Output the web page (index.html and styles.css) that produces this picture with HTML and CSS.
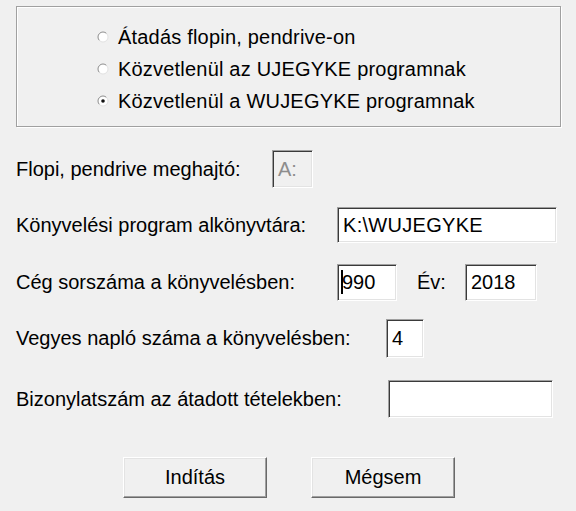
FILE: index.html
```html
<!DOCTYPE html>
<html lang="hu">
<head>
<meta charset="utf-8">
<title>Átadás</title>
<link rel="stylesheet" href="styles.css">
</head>
<body>
<div class="dialog">
  <div class="group">
    <div class="radio-row">
      <svg class="radio" viewBox="0 0 12 12" width="12" height="12"><circle cx="6" cy="6" r="5" fill="#fff"/><path d="M2.46 9.54 A5 5 0 0 1 9.54 2.46" fill="none" stroke="#8c8c8c" stroke-width="1"/><path d="M9.54 2.46 A5 5 0 0 1 2.46 9.54" fill="none" stroke="#e2e2e2" stroke-width="1"/></svg>
      <span>Átadás flopin, pendrive-on</span>
    </div>
    <div class="radio-row">
      <svg class="radio" viewBox="0 0 12 12" width="12" height="12"><circle cx="6" cy="6" r="5" fill="#fff"/><path d="M2.46 9.54 A5 5 0 0 1 9.54 2.46" fill="none" stroke="#8c8c8c" stroke-width="1"/><path d="M9.54 2.46 A5 5 0 0 1 2.46 9.54" fill="none" stroke="#e2e2e2" stroke-width="1"/></svg>
      <span>Közvetlenül az UJEGYKE programnak</span>
    </div>
    <div class="radio-row">
      <svg class="radio" viewBox="0 0 12 12" width="12" height="12"><circle cx="6" cy="6" r="5" fill="#fff"/><path d="M2.46 9.54 A5 5 0 0 1 9.54 2.46" fill="none" stroke="#8c8c8c" stroke-width="1"/><path d="M9.54 2.46 A5 5 0 0 1 2.46 9.54" fill="none" stroke="#e2e2e2" stroke-width="1"/><circle cx="6" cy="6" r="1.8" fill="#111"/></svg>
      <span>Közvetlenül a WUJEGYKE programnak</span>
    </div>
  </div>

  <div class="row row-1">
    <span class="label w-drive">Flopi, pendrive meghajtó:</span>
    <div class="field field-drive disabled">A:</div>
  </div>

  <div class="row row-2">
    <span class="label w-dir">Könyvelési program alkönyvtára:</span>
    <div class="field field-dir">K:\WUJEGYKE</div>
  </div>

  <div class="row row-3">
    <span class="label w-dir">Cég sorszáma a könyvelésben:</span>
    <div class="field field-ceg"><span class="caret"></span>990</div>
    <span class="label ev">Év:</span>
    <div class="field field-ev">2018</div>
  </div>

  <div class="row row-4">
    <span class="label w-naplo">Vegyes napló száma a könyvelésben:</span>
    <div class="field field-naplo">4</div>
  </div>

  <div class="row row-5">
    <span class="label w-biz">Bizonylatszám az átadott tételekben:</span>
    <div class="field field-biz"></div>
  </div>

  <div class="buttons">
    <div class="button">Indítás</div>
    <div class="button">Mégsem</div>
  </div>
</div>
</body>
</html>
```
FILE: styles.css
```css
html, body {
  margin: 0;
  padding: 0;
  background: #f0f0f0;
}

body {
  width: 576px;
  height: 511px;
  overflow: hidden;
  font-family: "Liberation Sans", Arial, sans-serif;
  font-size: 20px;
  color: #000;
}

.dialog {
  padding: 6px 0 0 16px;
}

.group {
  box-sizing: border-box;
  width: 545px;
  height: 121px;
  border: 1px solid #a0a0a0;
  box-shadow: 1px 1px 0 #ffffff, inset 1px 1px 0 #ffffff;
  padding: 14px 0 0 80px;
}

.radio-row {
  display: flex;
  align-items: center;
  height: 32px;
}

.radio-row span {
  letter-spacing: 0.2px;
}

.radio {
  display: block;
  flex: none;
  margin-right: 9px;
}

.row {
  display: flex;
  align-items: center;
}

.row-1 { margin-top: 23px; height: 38px; }
.row-2 { margin-top: 19px; height: 36px; }
.row-3 { margin-top: 20px; height: 38px; }
.row-4 { margin-top: 18px; height: 39px; }
.row-5 { margin-top: 22px; height: 38px; }

.label {
  flex: none;
  white-space: nowrap;
}

.w-drive { width: 256px; }
.w-dir { width: 321px; }
.w-naplo { width: 370px; }
.w-biz { width: 372px; }
.ev {
  margin-left: 20px;
  width: 48px;
}

.field {
  box-sizing: border-box;
  position: relative;
  flex: none;
  display: flex;
  align-items: center;
  background: #ffffff;
  border-style: solid;
  border-width: 1px;
  border-color: #a0a0a0 #ffffff #ffffff #a0a0a0;
  box-shadow: inset 1px 1px 0 #3a3a3a, inset -1px -1px 0 #e3e3e3;
  padding-left: 5px;
  white-space: nowrap;
}

.disabled {
  background: #f0f0f0;
  color: #8d8d8d;
}

.field-drive { width: 41px; height: 38px; }
.field-dir { width: 220px; height: 36px; letter-spacing: 0.3px; }
.field-ceg { width: 60px; height: 37px; padding-left: 3px; }
.field-ev { width: 72px; height: 37px; }
.field-naplo { width: 38px; height: 39px; }
.field-biz { width: 165px; height: 38px; }

.caret {
  display: inline-block;
  width: 2px;
  height: 24px;
  background: #000;
  margin-right: -1px;
}

.buttons {
  display: flex;
  margin-top: 39px;
  padding-left: 107px;
  gap: 44px;
}

.button {
  box-sizing: border-box;
  width: 144px;
  height: 41px;
  display: flex;
  align-items: center;
  justify-content: center;
  background: #f0f0f0;
  border-style: solid;
  border-width: 1px;
  border-color: #ffffff #696969 #696969 #ffffff;
  box-shadow: inset -1px -1px 0 #a0a0a0, inset 1px 1px 0 #e3e3e3;
}
```
